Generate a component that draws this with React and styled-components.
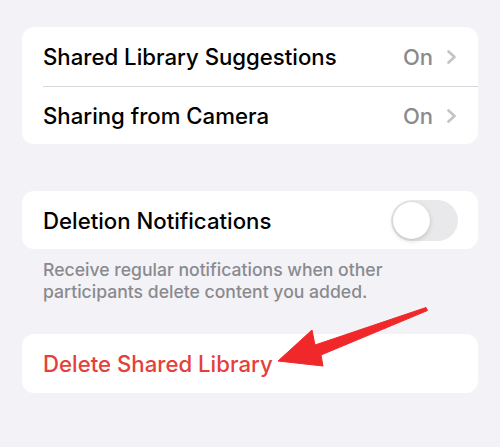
import React from "react";
import styled, { createGlobalStyle } from "styled-components";

const Global = createGlobalStyle`
  html, body { margin: 0; padding: 0; background: #f2f2f7; }
  body { font-family: Inter, "Noto Sans", "Liberation Sans", sans-serif; -webkit-font-smoothing: antialiased; }
`;

const Page = styled.div`
  position: relative;
  width: 500px;
  height: 447px;
  box-sizing: border-box;
  padding: 27px 22px 0 22px;
  background: #f2f2f7;
  overflow: hidden;
`;

const Card = styled.div`
  background: #ffffff;
  border-radius: 12px;
  overflow: hidden;
  margin-top: ${(p) => p.$top || 0}px;
`;

const Row = styled.div`
  display: flex;
  align-items: center;
  height: ${(p) => p.$h || 58}px;
  margin-left: 21px;
  padding-right: 21px;
  border-top: ${(p) => (p.$divider ? "1px solid #d8d8dc" : "none")};
  box-sizing: border-box;
`;

const Label = styled.span`
  flex: 1;
  font-size: 22.2px;
  font-weight: 500;
  color: ${(p) => (p.$danger ? "#e5413b" : "#000")};
`;

const Value = styled.span`
  font-size: 22px;
  font-weight: 500;
  color: #8a8a8e;
  margin-right: 13px;
`;

const Toggle = styled.div`
  width: 67px;
  height: 41px;
  border-radius: 21px;
  background: #e9e9eb;
  padding: 2px;
  box-sizing: border-box;
  margin-right: -1px;
`;

const Knob = styled.div`
  width: 37px;
  height: 37px;
  border-radius: 50%;
  background: #fff;
  box-shadow: 0 2px 5px rgba(0, 0, 0, 0.15), 0 0 0 0.5px rgba(0, 0, 0, 0.06);
`;

const Footer = styled.p`
  margin: 10px 0 0 21px;
  font-size: 17.6px;
  line-height: 21.5px;
  color: #8a8a8e;
  font-weight: 500;
`;

const Overlay = styled.svg`
  position: absolute;
  left: 0;
  top: 0;
  pointer-events: none;
`;

const Chevron = () => (
  <svg width="11" height="14" viewBox="0 0 11 14">
    <path d="M2.5 1.5 L8.5 7 L2.5 12.5" fill="none" stroke="#c4c4c7" strokeWidth="2.6" strokeLinecap="round" strokeLinejoin="round" />
  </svg>
);

export default function App() {
  return (
    <>
      <Global />
      <Page>
        <Card>
          <Row $h={59}>
            <Label>Shared Library Suggestions</Label>
            <Value>On</Value>
            <Chevron />
          </Row>
          <Row $h={58} $divider>
            <Label>Sharing from Camera</Label>
            <Value>On</Value>
            <Chevron />
          </Row>
        </Card>
        <Card $top={47}>
          <Row $h={58}>
            <Label>Deletion Notifications</Label>
            <Toggle>
              <Knob />
            </Toggle>
          </Row>
        </Card>
        <Footer>
          Receive regular notifications when other
          <br />
          participants delete content you added.
        </Footer>
        <Card $top={32}>
          <Row $h={59}>
            <Label $danger>Delete Shared Library</Label>
          </Row>
        </Card>
        <Overlay width="500" height="447" viewBox="0 0 500 447">
          <polygon
            points="278,361 312,330 315,345 426,307.5 427.5,310.5 321,355 323,366"
            fill="#f0282a"
            stroke="#f0282a"
            strokeWidth="1"
            strokeLinejoin="round"
          />
        </Overlay>
      </Page>
    </>
  );
}
